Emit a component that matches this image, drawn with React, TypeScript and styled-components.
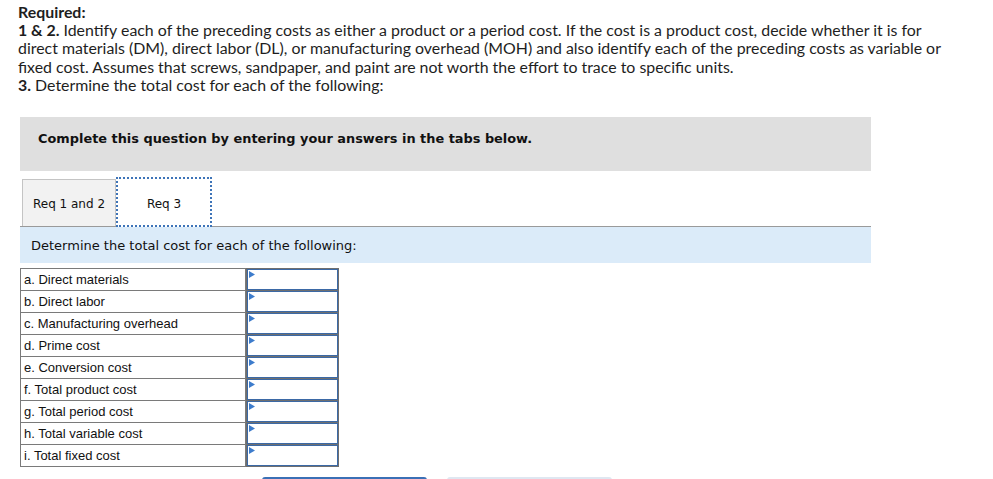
import React from "react";
import styled, { createGlobalStyle } from "styled-components";

const Global = createGlobalStyle`
  html, body { margin: 0; padding: 0; background: #fff; }
  body { overflow: hidden; }
`;

const Page = styled.div`
  width: 993px;
  height: 479px;
  overflow: hidden;
  padding: 3px 0 0 18px;
  box-sizing: border-box;
`;

const Instructions = styled.div`
  font-family: Lato, "Open Sans", sans-serif;
  font-size: 15.9px;
  line-height: 18.2px;
  color: #1e1e1e;
  width: 940px;
`;

const Strong = styled.b`
  font-weight: 700;
`;

const Para = styled.div``;

const Card = styled.div`
  margin: 23px 0 0 2px;
  width: 851px;
`;

const Notice = styled.div`
  box-sizing: border-box;
  height: 54px;
  background: #dfdfdf;
  padding: 14px 0 0 18px;
  font-family: "DejaVu Sans", Verdana, sans-serif;
  font-weight: 700;
  font-size: 12.9px;
  color: #111;
`;

const TabBar = styled.div`
  display: flex;
  align-items: flex-end;
  margin-top: 5px;
  padding-left: 2px;
  height: 50px;
  border-bottom: 1px solid #9a9a9a;
`;

const Tab = styled.div<{ $active?: boolean }>`
  box-sizing: border-box;
  height: ${(p) => (p.$active ? "50px" : "47px")};
  width: ${(p) => (p.$active ? "96px" : "94px")};
  display: flex;
  align-items: center;
  justify-content: center;
  font-family: "DejaVu Sans", Verdana, sans-serif;
  font-size: 12px;
  color: #111;
  background: ${(p) => (p.$active ? "#fff" : "#f2f2f2")};
  border: ${(p) => (p.$active ? "2px dotted #3e74b8" : "1px solid #c4c4c4")};
  border-bottom: ${(p) => (p.$active ? "2px dotted #3e74b8" : "none")};
  margin-bottom: ${(p) => (p.$active ? "-1px" : "0")};
  padding-top: ${(p) => (p.$active ? "4px" : "1px")};
`;

const Prompt = styled.div`
  background: #dbebf9;
  height: 36px;
  display: flex;
  align-items: center;
  padding-left: 11px;
  font-family: "DejaVu Sans", Verdana, sans-serif;
  font-size: 13px;
  color: #111;
`;

const Table = styled.table`
  margin-top: 5px;
  border-collapse: collapse;
  font-family: "Liberation Sans", Arial, sans-serif;
  font-size: 13px;
  color: #111;
`;

const LabelCell = styled.td`
  width: 221px;
  height: 21px;
  padding: 0 0 0 3px;
  border: 1px solid #7a7a7a;
  vertical-align: middle;
`;

const InputCell = styled.td`
  width: 92px;
  height: 21px;
  padding: 0;
  border: 1px solid #6f6f6f;
  background: #6f6f6f;
`;

const InputBox = styled.div`
  position: relative;
  box-sizing: border-box;
  width: 91px;
  height: 21px;
  margin-left: 1px;
  background: #fff;
  border: 1px solid #3b69a6;
`;

const Marker = styled.svg`
  position: absolute;
  left: 1px;
  top: 1px;
`;

const Buttons = styled.div`
  display: flex;
  gap: 20px;
  margin-top: 10px;
  padding-left: 242px;
`;

const NavButton = styled.div<{ $primary?: boolean }>`
  width: 165px;
  height: 36px;
  border-radius: 3px 3px 0 0;
  background: ${(p) => (p.$primary ? "#3b70b6" : "#dfe7f1")};
`;

const rows = [
  "a. Direct materials",
  "b. Direct labor",
  "c. Manufacturing overhead",
  "d. Prime cost",
  "e. Conversion cost",
  "f. Total product cost",
  "g. Total period cost",
  "h. Total variable cost",
  "i. Total fixed cost",
];

export default function App() {
  return (
    <>
      <Global />
      <Page>
        <Instructions>
          <Para>
            <Strong>Required:</Strong>
          </Para>
          <Para>
            <Strong>1 &amp; 2.</Strong> Identify each of the preceding costs as either a product or a period cost. If the cost is a product cost, decide whether it is for direct materials (DM), direct labor (DL), or manufacturing overhead (MOH) and also identify each of the preceding costs as variable or fixed cost. Assumes that screws, sandpaper, and paint are not worth the effort to trace to specific units.
          </Para>
          <Para>
            <Strong>3.</Strong> Determine the total cost for each of the following:
          </Para>
        </Instructions>
        <Card>
          <Notice>Complete this question by entering your answers in the tabs below.</Notice>
          <TabBar>
            <Tab>Req 1 and 2</Tab>
            <Tab $active>Req 3</Tab>
          </TabBar>
          <Prompt>Determine the total cost for each of the following:</Prompt>
          <Table>
            <tbody>
              {rows.map((r) => (
                <tr key={r}>
                  <LabelCell>{r}</LabelCell>
                  <InputCell>
                    <InputBox>
                      <Marker width="6" height="7" viewBox="0 0 6 7">
                        <polygon points="0,0 6,3.5 0,7" fill="#3d7ccc" />
                      </Marker>
                    </InputBox>
                  </InputCell>
                </tr>
              ))}
            </tbody>
          </Table>
          <Buttons>
            <NavButton $primary />
            <NavButton />
          </Buttons>
        </Card>
      </Page>
    </>
  );
}
